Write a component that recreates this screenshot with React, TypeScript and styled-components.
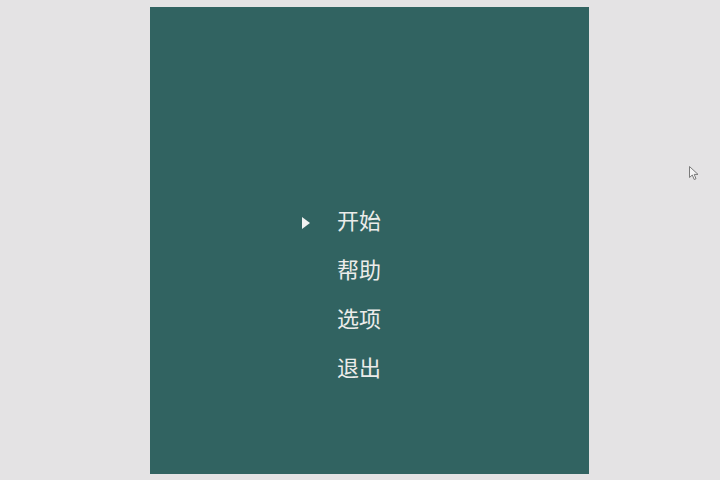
import React from "react";
import styled, { createGlobalStyle } from "styled-components";

const Global = createGlobalStyle`
  html, body { margin: 0; padding: 0; background: #e4e3e4; }
  body { width: 720px; height: 480px; overflow: hidden; position: relative; }
`;

const Page = styled.div`
  width: 720px;
  height: 480px;
  padding: 7px 0 0 150px;
  box-sizing: border-box;
`;

const Panel = styled.div`
  width: 439px;
  height: 467px;
  background: #316361;
  box-sizing: border-box;
  padding: 187px 0 0 152px;
  display: flex;
  flex-direction: column;
`;

const Item = styled.div`
  height: 49px;
  display: flex;
  align-items: center;
  font-family: "Noto Sans CJK SC", "Noto Sans", sans-serif;
  font-size: 22px;
  color: #ececea;
  line-height: 1;
`;

const Marker = styled.span<{ $on: boolean }>`
  width: 0;
  height: 0;
  border-top: 6px solid transparent;
  border-bottom: 6px solid transparent;
  border-left: 8px solid ${(p) => (p.$on ? "#f2f2f2" : "transparent")};
  margin-right: 27px;
  margin-top: 9px;
`;

const Label = styled.span`
  letter-spacing: 0px;
`;

const Cursor = styled.svg`
  position: absolute;
  left: 689px;
  top: 166px;
`;

const items = ["开始", "帮助", "选项", "退出"];

export default function App() {
  return (
    <>
      <Global />
      <Page>
        <Panel>
          {items.map((t, i) => (
            <Item key={t}>
              <Marker $on={i === 0} />
              <Label>{t}</Label>
            </Item>
          ))}
        </Panel>
      </Page>
      <Cursor width="12" height="16" viewBox="0 0 12 16">
        <path
          d="M0.5 0.5 L0.5 11.5 L3.3 9 L5.2 13.5 L7 12.7 L5.2 8.4 L9 8.4 Z"
          fill="#f4f4f4"
          stroke="#7a7a7a"
          strokeWidth="1"
          strokeLinejoin="round"
        />
      </Cursor>
    </>
  );
}
